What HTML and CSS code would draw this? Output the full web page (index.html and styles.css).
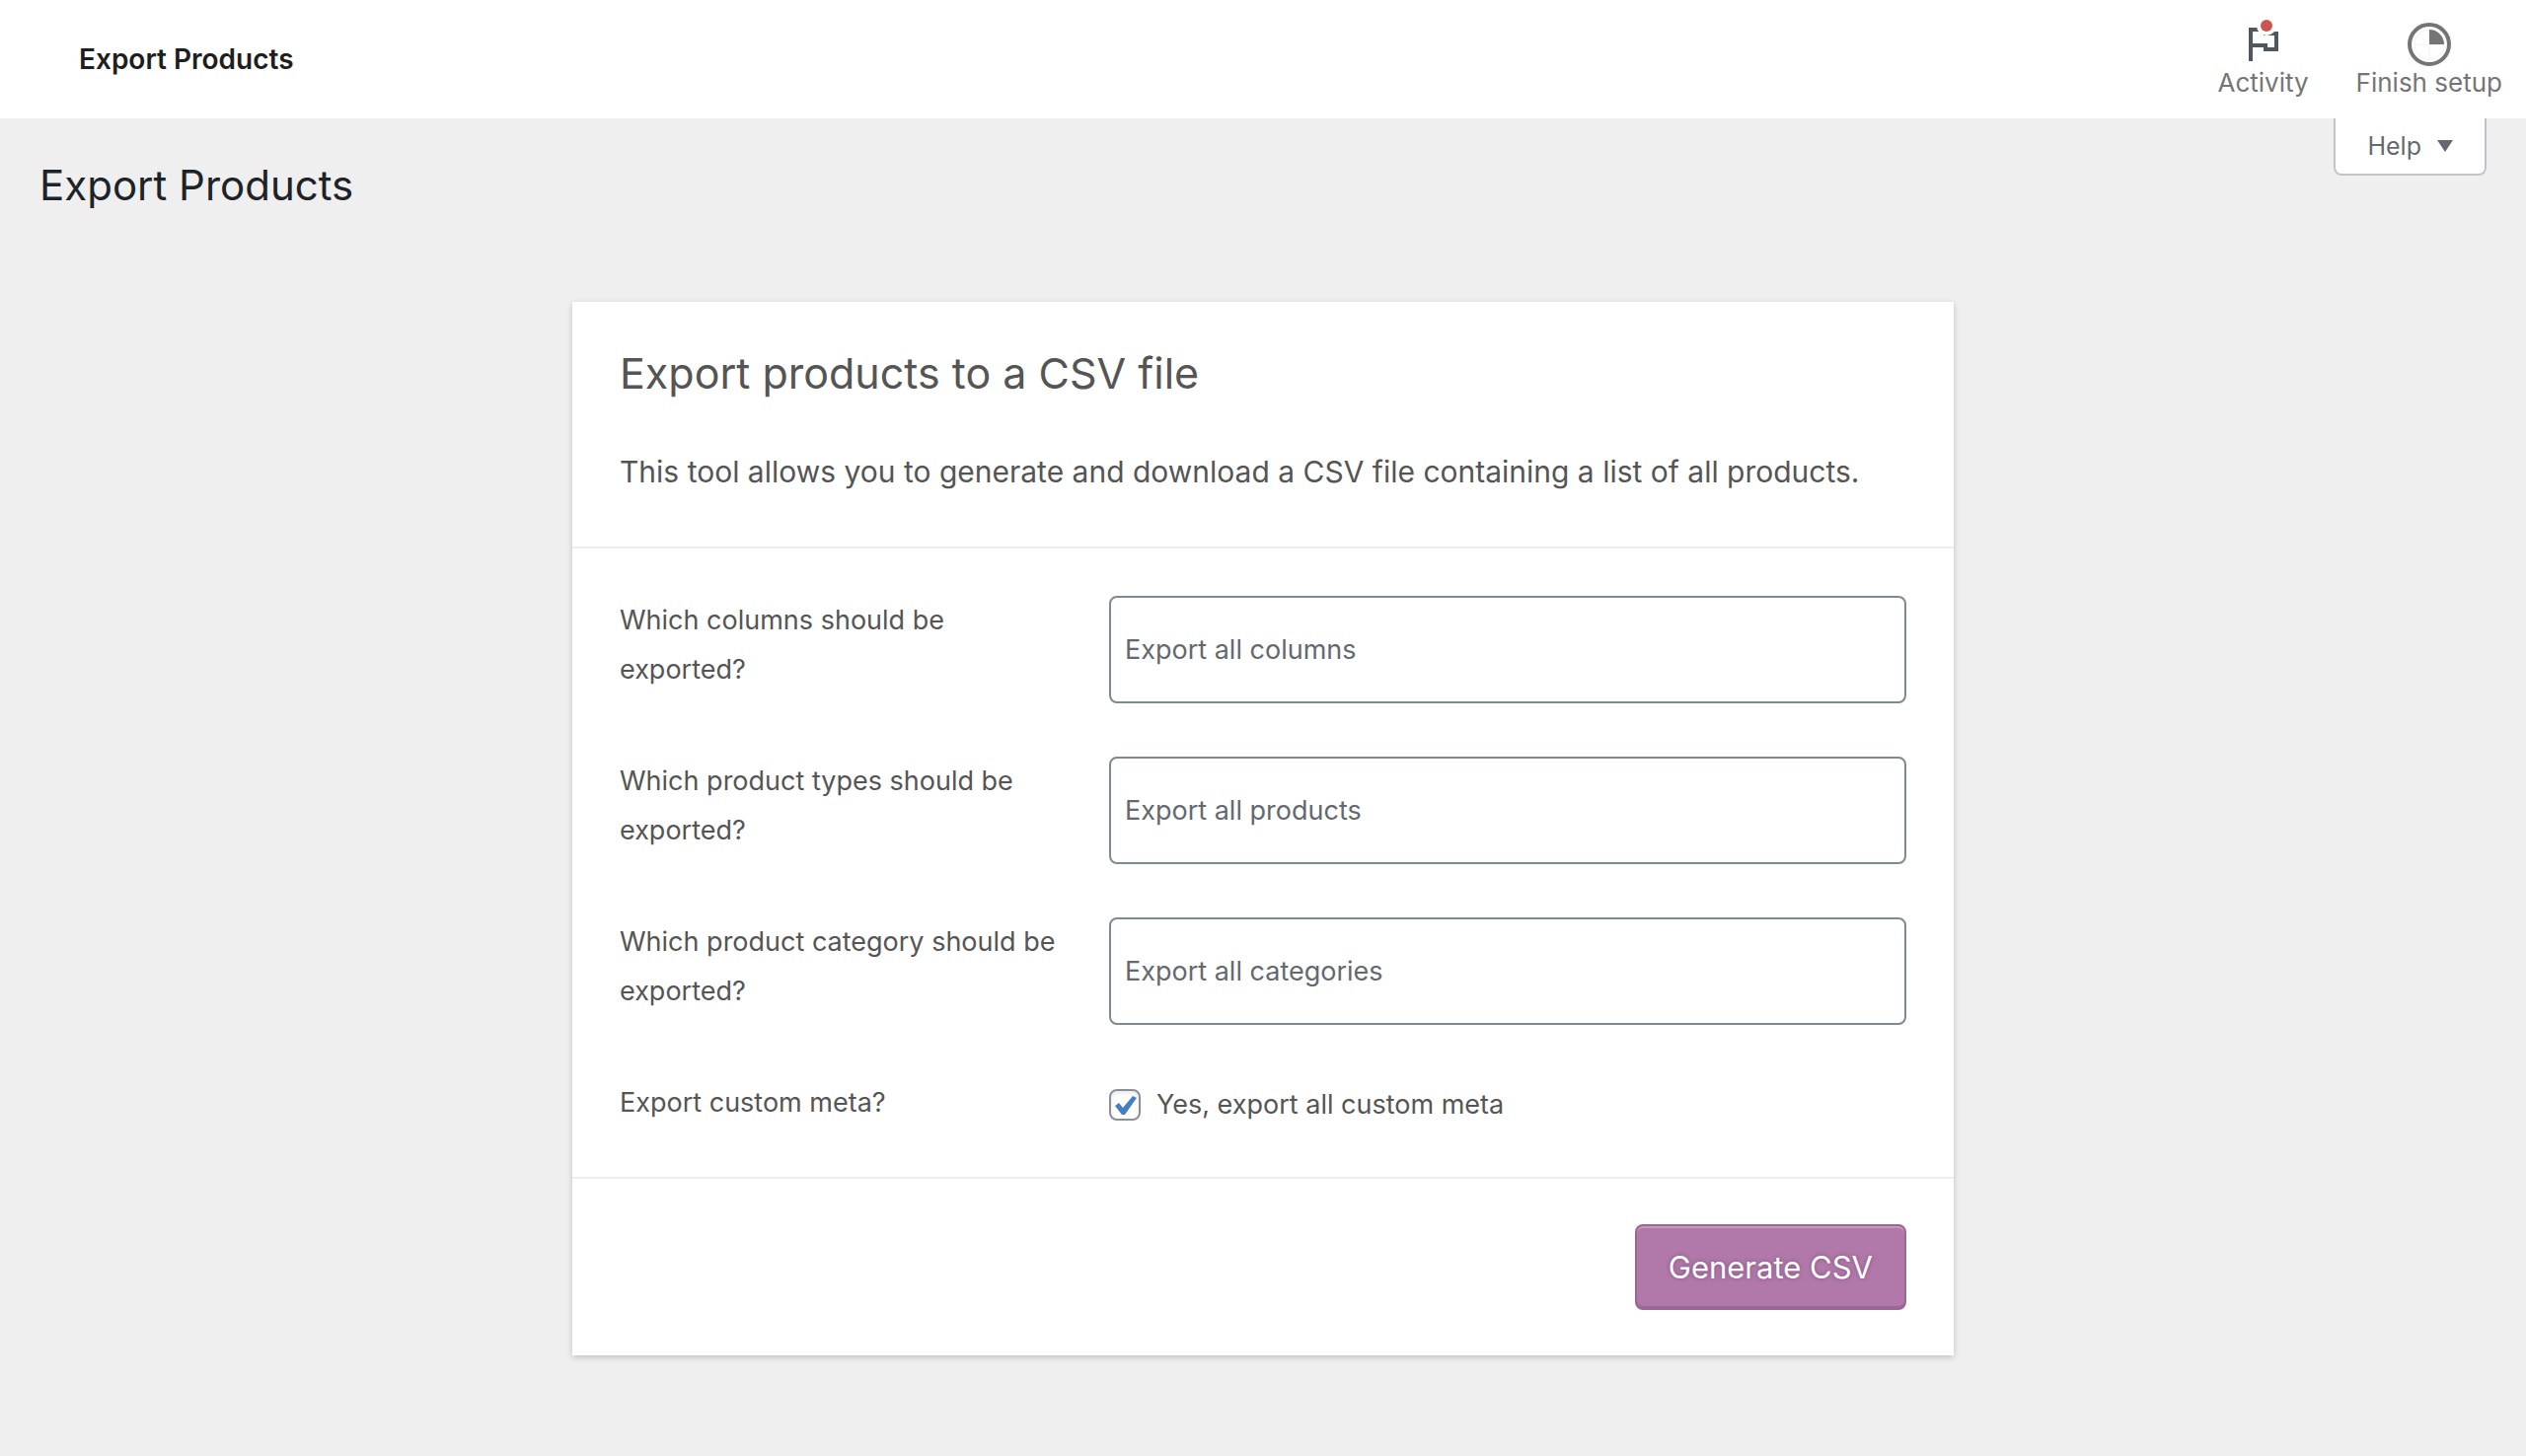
FILE: index.html
```html
<!DOCTYPE html>
<html lang="en">
  <head>
    <meta charset="UTF-8" />
    <meta name="viewport" content="width=device-width, initial-scale=1.0" />
    <title>Export Products</title>
    <link rel="stylesheet" href="styles.css">
  </head>
  <body>
    <header class="topbar">
      <div class="topbar-title">Export Products</div>
      <nav class="tabs">
        <button type="button" class="tab">
          <svg class="tab-icon" viewBox="0 0 48 48" aria-hidden="true">
            <path fill="#50575e" fill-rule="evenodd" d="M9 8h18v4h12v20H24v-4H13v14H9zM13 12v12h15v4h7V16H24v-4z" />
            <circle cx="27" cy="6" r="10" fill="#fff" />
            <circle cx="27" cy="6" r="6" fill="#cc5550" />
          </svg>
          <span>Activity</span>
        </button>
        <button type="button" class="tab">
          <svg class="tab-icon" viewBox="0 0 48 48" aria-hidden="true">
            <circle cx="24" cy="25" r="20" fill="none" stroke="#757575" stroke-width="4" />
            <circle cx="24" cy="25" r="15" fill="none" stroke="#f3f3f3" />
            <path d="M24 10v30M9 25h30" stroke="#f3f3f3" />
            <path d="M24 10a15 15 0 0 1 15 15H24z" fill="#757575" />
          </svg>
          <span>Finish setup</span>
        </button>
      </nav>
    </header>

    <div class="page-head">
      <h1>Export Products</h1>
      <button type="button" class="help">
        Help
        <svg class="help-arrow" viewBox="0 0 16 12" aria-hidden="true">
          <path d="M0 0h16L8 12z" fill="#646970" />
        </svg>
      </button>
    </div>

    <main>
      <form class="exporter">
        <div class="exporter-header">
          <h2>Export products to a CSV file</h2>
          <p>This tool allows you to generate and download a CSV file containing a list of all products.</p>
        </div>

        <div class="exporter-options">
          <label for="columns">Which columns should be exported?</label>
          <input type="text" id="columns" class="field" placeholder="Export all columns" />

          <label for="types">Which product types should be exported?</label>
          <input type="text" id="types" class="field" placeholder="Export all products" />

          <label for="category">Which product category should be exported?</label>
          <input type="text" id="category" class="field" placeholder="Export all categories" />

          <label for="meta">Export custom meta?</label>
          <div class="check">
            <input type="checkbox" id="meta" checked />
            <label for="meta">Yes, export all custom meta</label>
          </div>
        </div>

        <div class="exporter-actions">
          <button type="submit" class="generate">Generate CSV</button>
        </div>
      </form>
    </main>
  </body>
</html>
```

FILE: styles.css
```css
* {
  box-sizing: border-box;
}

body {
  margin: 0;
  min-height: 100vh;
  background: #efefef;
  color: #50575e;
  font-family: Inter, "Liberation Sans", sans-serif;
  font-size: 26px;
}

button,
input {
  font-family: inherit;
}

h1,
h2,
p {
  margin: 0;
  font-weight: 400;
}

/* top bar */
.topbar {
  display: flex;
  align-items: center;
  justify-content: space-between;
  padding: 20px 24px 20px 80px;
  background: #fff;
}

.topbar-title {
  color: #1e1e1e;
  font-size: 28px;
  font-weight: 600;
}

.tabs {
  display: flex;
  gap: 48px;
}

.tab {
  display: flex;
  flex-direction: column;
  align-items: center;
  padding: 0;
  border: none;
  background: none;
  color: #757575;
  font-size: 26px;
  line-height: 32px;
  cursor: pointer;
}

.tab-icon {
  width: 48px;
  height: 48px;
}

/* page title and help tab */
.page-head {
  display: flex;
  align-items: flex-start;
  justify-content: space-between;
  padding: 0 40px;
}

.page-head h1 {
  padding: 38px 0;
  color: #1d2327;
  font-size: 42px;
  line-height: 60px;
}

.help {
  display: flex;
  align-items: center;
  gap: 16px;
  padding: 8px 32px;
  border: 2px solid #c3c4c7;
  border-top: none;
  border-radius: 0 0 8px 8px;
  background: #fff;
  color: #646970;
  font-size: 25px;
  line-height: 40px;
  cursor: pointer;
}

.help-arrow {
  width: 16px;
  height: 12px;
}

/* export form */
.exporter {
  max-width: 1400px;
  margin: 50px auto;
  background: #fff;
  color: #555;
  box-shadow: 0 2px 6px rgba(0, 0, 0, 0.2);
}

.exporter-header {
  padding: 48px;
  border-bottom: 2px solid #eee;
}

.exporter-header h2 {
  margin-bottom: 48px;
  font-size: 43px;
  line-height: 48px;
}

.exporter-header p {
  font-size: 30px;
  line-height: 56px;
}

.exporter-options {
  display: grid;
  grid-template-columns: 448px 1fr;
  gap: 54px 48px;
  padding: 48px;
  font-size: 27px;
  line-height: 50px;
}

.field {
  width: 100%;
  height: 109px;
  padding: 0 14px;
  border: 2px solid #7e8993;
  border-radius: 8px;
  background: #fff;
  color: #555;
  font-size: 27px;
}

.field::placeholder {
  color: #646970;
  opacity: 1;
}

.check {
  display: flex;
  align-items: center;
  gap: 16px;
  padding-top: 2px;
}

.check input {
  appearance: none;
  width: 32px;
  height: 32px;
  margin: 0;
  border: 2px solid #8c8f94;
  border-radius: 8px;
  background: #fff;
  box-shadow: inset 0 2px 4px rgba(0, 0, 0, 0.1);
}

.check input:checked {
  background: #fff url("data:image/svg+xml,%3Csvg xmlns='http://www.w3.org/2000/svg' viewBox='0 0 28 28'%3E%3Cpath d='M4 15l4-3 4 5L22 5l4 2-12 17h-3z' fill='%23467fc0'/%3E%3C/svg%3E") center no-repeat;
}

.exporter-actions {
  display: flex;
  justify-content: flex-end;
  padding: 46px 48px;
  border-top: 2px solid #eee;
}

.generate {
  padding: 0 32px;
  border: 2px solid #9b6797;
  border-radius: 8px;
  background: #b179aa;
  box-shadow: inset 0 2px 0 rgba(255, 255, 255, 0.25), inset 0 -2px 0 #9b6797;
  color: #fff;
  font-size: 31px;
  line-height: 83px;
  text-shadow: 0 0 4px #7d4f79;
  cursor: pointer;
}
```
